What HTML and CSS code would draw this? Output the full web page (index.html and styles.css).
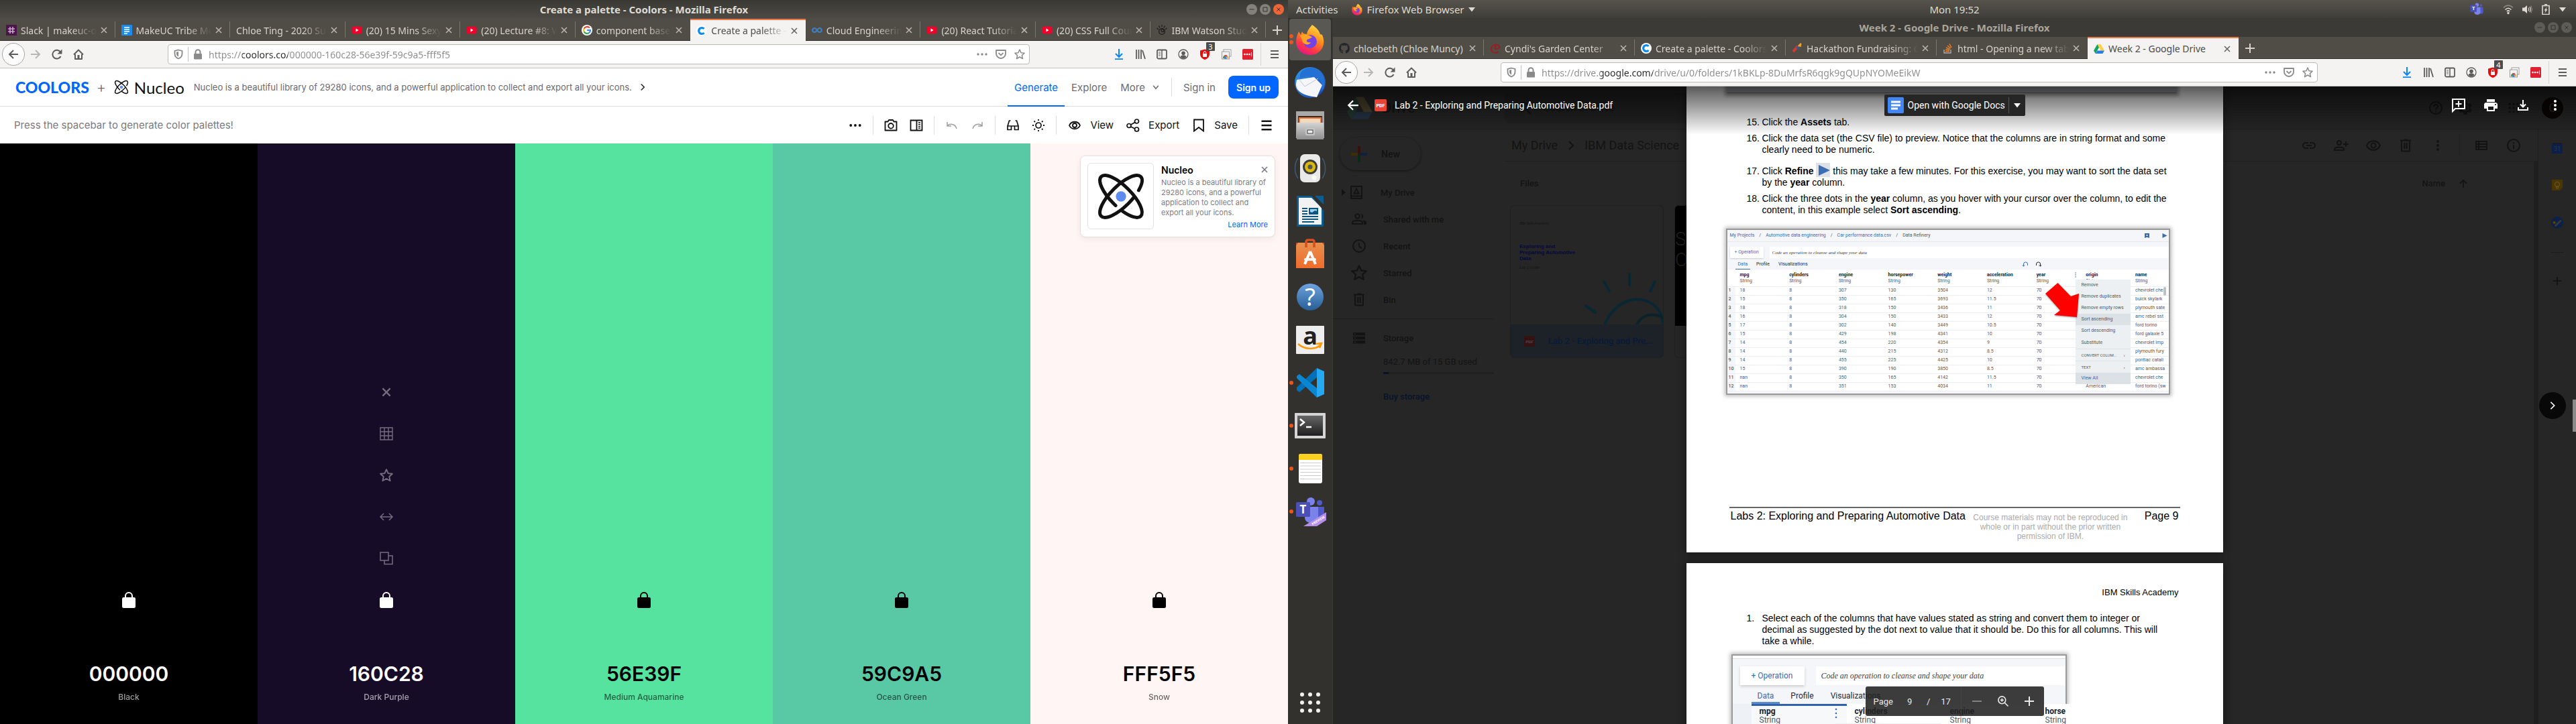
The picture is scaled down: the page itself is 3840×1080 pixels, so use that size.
FILE: index.html
```html
<!DOCTYPE html>
<html lang="en">
<head>
<meta charset="utf-8">
<title>Desktop</title>
<link rel="stylesheet" href="styles.css">
</head>
<body>
<svg class="defs" aria-hidden="true">
  <defs>
    <linearGradient id="g-fox" x1="0.8" y1="0" x2="0.3" y2="1"><stop offset="0" stop-color="#ffe14a"/><stop offset=".45" stop-color="#ff8a1c"/><stop offset=".75" stop-color="#ff3647"/><stop offset="1" stop-color="#e31587"/></linearGradient>
    <linearGradient id="g-bird" x1="0" y1="0" x2="1" y2="1"><stop offset="0" stop-color="#2f9be8"/><stop offset="1" stop-color="#1b3fae"/></linearGradient>
    <linearGradient id="g-metal" x1="0" y1="0" x2="0" y2="1"><stop offset="0" stop-color="#d4d4d4"/><stop offset="1" stop-color="#8d8d8d"/></linearGradient>
    <linearGradient id="g-help" x1="0" y1="0" x2="0" y2="1"><stop offset="0" stop-color="#6ea2e0"/><stop offset="1" stop-color="#285f95"/></linearGradient>
    <linearGradient id="g-bag" x1="0" y1="0" x2="0" y2="1"><stop offset="0" stop-color="#e8904e"/><stop offset="1" stop-color="#ee6c2c"/></linearGradient>
    <linearGradient id="g-term" x1="0" y1="0" x2="0" y2="1"><stop offset="0" stop-color="#666"/><stop offset="1" stop-color="#1e1e1e"/></linearGradient>
  </defs>
  <symbol id="x" viewBox="0 0 10 10"><path d="M1 1l8 8M9 1l-8 8" stroke="currentColor" stroke-width="1.6"/></symbol>
  <symbol id="plus" viewBox="0 0 16 16"><path d="M8 1v14M1 8h14" stroke="currentColor" stroke-width="2"/></symbol>
  <symbol id="back" viewBox="0 0 16 16"><path d="M15 8H2M8 2L2 8l6 6" fill="none" stroke="currentColor" stroke-width="2"/></symbol>
  <symbol id="fwd" viewBox="0 0 16 16"><path d="M1 8h13M8 2l6 6-6 6" fill="none" stroke="currentColor" stroke-width="2"/></symbol>
  <symbol id="reload" viewBox="0 0 16 16"><path d="M13.500 11A6.400 6.400 0 1 1 13 4.500" fill="none" stroke="currentColor" stroke-width="2"/><path d="M15.500 0.500v7H8.500z" fill="currentColor"/></symbol>
  <symbol id="home" viewBox="0 0 16 16"><path d="M1 8.500L8 1.500l7 7M3 8v7h10V8" fill="none" stroke="currentColor" stroke-width="2" stroke-linejoin="round"/><path d="M6.500 9h3v6h-3z" fill="currentColor"/></symbol>
  <symbol id="shield" viewBox="0 0 16 16"><path d="M8 1.500l5.500 1.500v4c0 4-2.500 6.500-5.500 7.500C5 13.500 2.500 11 2.500 7V3z" fill="none" stroke="currentColor" stroke-width="1.800"/><path d="M8 4v7.500C6 10.500 5 9 5 7V4.800z" fill="currentColor"/></symbol>
  <symbol id="lock" viewBox="0 0 16 16"><path d="M4.500 8V4.800a3.500 3.500 0 0 1 7 0V8" fill="none" stroke="currentColor" stroke-width="2"/><rect x="2" y="7" width="12" height="8.500" rx="1.200" fill="currentColor"/></symbol>
  <symbol id="dots" viewBox="0 0 16 16"><g fill="currentColor"><circle cx="2" cy="8" r="1.700"/><circle cx="8" cy="8" r="1.700"/><circle cx="14" cy="8" r="1.700"/></g></symbol>
  <symbol id="vdots" viewBox="0 0 24 24"><g fill="currentColor"><circle cx="12" cy="6" r="2"/><circle cx="12" cy="12" r="2"/><circle cx="12" cy="18" r="2"/></g></symbol>
  <symbol id="pocket" viewBox="0 0 16 16"><path d="M1 2h14v5a7 7 0 0 1-14 0z" fill="none" stroke="currentColor" stroke-width="1.800" stroke-linejoin="round"/><path d="M4.500 6L8 9.300 11.500 6" fill="none" stroke="currentColor" stroke-width="1.800"/></symbol>
  <symbol id="star" viewBox="0 0 16 16"><path d="M8 1l2.100 4.700 5 .5-3.700 3.400 1.100 5L8 12l-4.500 2.600 1.100-5L.9 6.200l5-.5z" fill="none" stroke="currentColor" stroke-width="1.500" stroke-linejoin="round"/></symbol>
  <symbol id="down" viewBox="0 0 16 16"><path d="M8 0v12M3 7l5 5 5-5M2 15.200h12" fill="none" stroke="#0a84ff" stroke-width="2"/></symbol>
  <symbol id="library" viewBox="0 0 16 16"><path d="M2 1v14M5.500 1v14M9 1v14M11 2l4 13" stroke="currentColor" stroke-width="1.800"/></symbol>
  <symbol id="sidebar" viewBox="0 0 16 16"><rect x="1" y="1.500" width="14" height="13" rx="1.800" fill="none" stroke="currentColor" stroke-width="1.800"/><path d="M8 2v12" stroke="currentColor" stroke-width="1.500"/><path d="M3 5h3M3 7.500h3M3 10h3" stroke="currentColor"/></symbol>
  <symbol id="account" viewBox="0 0 16 16"><circle cx="8" cy="8" r="7" fill="none" stroke="currentColor" stroke-width="1.300"/><circle cx="8" cy="6.300" r="2.800" fill="currentColor"/><path d="M3.500 12.200a4.600 3.600 0 0 1 9 0A6 6 0 0 1 3.500 12.200" fill="currentColor"/></symbol>
  <symbol id="redshield" viewBox="0 0 16 16"><path d="M8 .5l7 2v5c0 4.500-3 7-7 8.500-4-1.500-7-4-7-8.500v-5z" fill="#e80d0d"/><rect x="5" y="7" width="6" height="5" fill="#fff"/><path d="M6.200 7V5.500a1.800 1.800 0 0 1 3.600 0V7" fill="none" stroke="#fff"/></symbol>
  <symbol id="webstore" viewBox="0 0 16 16"><rect x="4" y="1" width="11" height="10" fill="#fff" stroke="#999"/><rect x="1.500" y="4" width="11" height="11" fill="#f2f2f2" stroke="#999"/><path d="M3 14a4 5 0 0 1 8 0" fill="#e33b2e"/><circle cx="7" cy="13" r="2.300" fill="#3d85f4"/><path d="M3 14a4 5 0 0 1 2-4l1 4z" fill="#31a350"/><path d="M11 14a4 5 0 0 0-2-4l-1 4z" fill="#fbc02d"/></symbol>
  <symbol id="lastpass" viewBox="0 0 16 16"><rect width="16" height="16" rx="1.500" fill="#e0202f"/><g fill="#fff"><circle cx="3.500" cy="8" r="1.300"/><circle cx="7" cy="8" r="1.300"/><circle cx="10.500" cy="8" r="1.300"/><path d="M13 5h1v6h-1z"/></g></symbol>
  <symbol id="menu" viewBox="0 0 16 16"><path d="M2 3h12M2 8h12M2 13h12" stroke="currentColor" stroke-width="2"/></symbol>
  <symbol id="wmin" viewBox="0 0 16 16"><circle cx="8" cy="8" r="8" fill="currentColor"/><path d="M4.500 8h7" stroke="#34332e"/></symbol>
  <symbol id="wmax" viewBox="0 0 16 16"><circle cx="8" cy="8" r="8" fill="currentColor"/><path d="M5 5h6v6H5z" fill="none" stroke="#34332e"/></symbol>
  <symbol id="wclose" viewBox="0 0 16 16"><circle cx="8" cy="8" r="8" fill="currentColor"/><path d="M5.500 5.500l5 5M10.500 5.500l-5 5" stroke="#34332e"/></symbol>
  <symbol id="slack" viewBox="0 0 16 16"><rect width="16" height="16" fill="#4a154b"/><path d="M6 3v10M10 3v10M3 6h10M3 10h10" stroke="#c9a5c8" stroke-width="1.600"/></symbol>
  <symbol id="gdoc" viewBox="0 0 16 16"><rect width="16" height="16" rx="1" fill="#1a8cf0"/><path d="M4 4h8M4 7h8M4 10h8M4 13h5" stroke="#fff" stroke-width="1.500"/></symbol>
  <symbol id="yt" viewBox="0 0 16 16"><rect x=".5" y="2.500" width="15" height="11" rx="2.500" fill="#f0022a"/><path d="M6.500 5.500v5l4-2.500z" fill="#fff"/></symbol>
  <symbol id="google" viewBox="0 0 16 16"><circle cx="8" cy="8" r="8" fill="#fff"/><g fill="none" stroke-width="2.200"><path d="M11.800 4.600A5 5 0 0 0 3.600 5.800" stroke="#ea4335"/><path d="M3.600 5.800a5 5 0 0 0 0 4.500" stroke="#fbbc05"/><path d="M3.600 10.300a5 5 0 0 0 7.600 1.500" stroke="#34a853"/><path d="M11.200 11.800A5 5 0 0 0 13 8H8" stroke="#4285f4"/></g></symbol>
  <symbol id="coolors" viewBox="0 0 16 16"><circle cx="8" cy="8" r="8" fill="#fff"/><path d="M11.500 5a4.500 4.500 0 1 0 0 6" fill="none" stroke="#0a8cf0" stroke-width="3.200"/></symbol>
  <symbol id="infinity" viewBox="0 0 16 16"><path d="M8 8C6.500 5.500 5.500 5 4.200 5a3 3 0 0 0 0 6C5.500 11 6.500 10.500 8 8s2.500-3 3.800-3a3 3 0 0 1 0 6C10.500 11 9.500 10.500 8 8z" fill="none" stroke="#3f7fc0" stroke-width="2.200"/></symbol>
  <symbol id="watson" viewBox="0 0 16 16"><g fill="none" stroke="#1b1b1b" stroke-width="1.200"><circle cx="8" cy="10" r="4.300"/><path d="M8 0v3M3.500 1.500L5 4.500M12.500 1.500L11 4.500M.5 5L3 7M15.500 5L13 7"/><circle cx="9" cy="8.500" r="2"/></g></symbol>
  <symbol id="github" viewBox="0 0 16 16"><path fill="#23272c" d="M8 0C3.580 0 0 3.580 0 8c0 3.540 2.290 6.530 5.470 7.590.4.070.55-.17.55-.38 0-.19-.01-.82-.01-1.490-2.010.37-2.530-.49-2.690-.94-.09-.23-.48-.94-.82-1.130-.28-.15-.68-.52-.01-.53.63-.01 1.080.58 1.230.82.72 1.210 1.870.87 2.330.66.07-.52.28-.87.51-1.070-1.780-.2-3.640-.89-3.640-3.950 0-.87.31-1.590.82-2.150-.08-.2-.36-1.020.08-2.120 0 0 .67-.21 2.200.82.64-.18 1.320-.27 2-.27s1.360.09 2 .27c1.530-1.040 2.200-.82 2.200-.82.44 1.100.16 1.920.08 2.120.51.56.82 1.270.82 2.150 0 3.070-1.870 3.750-3.650 3.950.29.25.54.73.54 1.480 0 1.070-.01 1.930-.01 2.200 0 .21.15.46.55.38A8.010 8.010 0 0 0 16 8c0-4.420-3.580-8-8-8z"/></symbol>
  <symbol id="garden" viewBox="0 0 16 16"><path d="M13 13C7 17 1 13 2 8s8-7 11-4-1 6-4 5-1-5 1-4" fill="none" stroke="#a3161c" stroke-width="1.600"/></symbol>
  <symbol id="hammer" viewBox="0 0 16 16"><path d="M2 13l7-8" stroke="#d63a2c" stroke-width="4"/><path d="M7 6l3 3" stroke="#2c5aa8" stroke-width="3"/><path d="M10 5l4-4M12 5l2-1" stroke="#f0a829" stroke-width="2.500"/></symbol>
  <symbol id="stack" viewBox="0 0 16 16"><path d="M2 10v5h10v-5" fill="none" stroke="#aaa" stroke-width="1.400"/><path d="M4 12.500h6M4.200 10l6 .8M5 7l5.600 2.300M7 4l4.600 4M10 1.500l3 5.500" stroke="#f48024" stroke-width="1.400"/></symbol>
  <symbol id="drive" viewBox="0 0 16 16"><path d="M5.500 1L0 10.500 2.700 15 8 5.500z" fill="#11a35c"/><path d="M5.500 1h5L16 10.500h-5.500z" fill="#ffcf48"/><path d="M5.500 10.500H16L13.300 15H2.700z" fill="#2a7de1"/></symbol>
  <symbol id="nucleo" viewBox="0 0 24 24"><g fill="none" stroke="#111" stroke-width="1.500" stroke-linecap="round"><ellipse cx="12" cy="12" rx="4.600" ry="12.500" transform="rotate(45 12 12)" stroke-dasharray="49 4"/><ellipse cx="12" cy="12" rx="4.600" ry="12.500" transform="rotate(-45 12 12)" stroke-dasharray="23 4 40"/></g><circle cx="12" cy="12" r="2.300" fill="#5e8bf0"/></symbol>
  <symbol id="chevr" viewBox="0 0 16 16"><path d="M5 2l6 6-6 6" fill="none" stroke="currentColor" stroke-width="2"/></symbol>
  <symbol id="chevd" viewBox="0 0 16 16"><path d="M3 5l5 6 5-6" fill="none" stroke="currentColor" stroke-width="2"/></symbol>
  <symbol id="camera" viewBox="0 0 20 20"><path d="M1.500 4.500h4L7 2h6l1.500 2.500h4v13h-17z" fill="none" stroke="currentColor" stroke-width="1.800" stroke-linejoin="round"/><circle cx="10" cy="10.800" r="3.800" fill="none" stroke="currentColor" stroke-width="1.800"/></symbol>
  <symbol id="collage" viewBox="0 0 20 20"><path d="M1.500 2.500h17v15h-17zM10.500 2.500v15" fill="none" stroke="currentColor" stroke-width="1.800"/><path d="M13 6h3M13 8.700h3M13 11.400h3M13 14h3" stroke="currentColor" stroke-width="1.300"/></symbol>
  <symbol id="undo" viewBox="0 0 20 20"><path d="M3 5v6h6M3 11c3-4 12-4 14 4" fill="none" stroke="currentColor" stroke-width="1.500"/></symbol>
  <symbol id="redo" viewBox="0 0 20 20"><path d="M17 5v6h-6M17 11c-3-4-12-4-14 4" fill="none" stroke="currentColor" stroke-width="1.500"/></symbol>
  <symbol id="glasses" viewBox="0 0 20 20"><path d="M2 11v5.500h5.500V11zM12.500 11v5.500H18V11zM2 11h16M2 11L4.500 3H6.500M18 11L15.500 3h-2" fill="none" stroke="currentColor" stroke-width="1.700"/></symbol>
  <symbol id="sun" viewBox="0 0 20 20"><circle cx="10" cy="10" r="4" fill="none" stroke="currentColor" stroke-width="1.700"/><path d="M10 1v2M10 17v2M1 10h2M17 10h2M3.500 3.500L5 5M15 15l1.500 1.500M16.500 3.500L15 5M5 15l-1.500 1.500" stroke="currentColor" stroke-width="1.800"/></symbol>
  <symbol id="eye" viewBox="0 0 20 20"><path d="M2 10c3-7 13-7 16 0-3 7-13 7-16 0z" fill="none" stroke="currentColor" stroke-width="1.800"/><circle cx="10" cy="10" r="3" fill="none" stroke="currentColor" stroke-width="1.800"/></symbol>
  <symbol id="share" viewBox="0 0 20 20"><g fill="none" stroke="currentColor" stroke-width="1.700"><circle cx="4" cy="10.500" r="3"/><circle cx="15.500" cy="4" r="3"/><circle cx="15.500" cy="16" r="3"/><path d="M6.600 9l6.300-3.500M6.600 12l6.300 3"/></g></symbol>
  <symbol id="bookmark" viewBox="0 0 20 20"><path d="M3 1.500h14v17l-7-5.500-7 5.500z" fill="none" stroke="currentColor" stroke-width="1.800"/></symbol>
  <symbol id="grid" viewBox="0 0 20 20"><path d="M1 1h18v18H1zM7 1v18M13 1v18M1 7h18M1 13h18" fill="none" stroke="currentColor" stroke-width="1.400"/></symbol>
  <symbol id="drag" viewBox="0 0 20 20"><path d="M1 10h18M6 5l-5 5 5 5M14 5l5 5-5 5" fill="none" stroke="currentColor" stroke-width="1.500"/></symbol>
  <symbol id="copy" viewBox="0 0 20 20"><path d="M1 1h12v12H1zM13 6h6v12.500H7V13" fill="none" stroke="currentColor" stroke-width="1.500"/></symbol>
  <symbol id="padlock" viewBox="0 0 20 24"><path d="M5 10V6a5 5 0 0 1 10 0v4" fill="none" stroke="currentColor" stroke-width="2"/><rect y="8" width="20" height="16" rx="2.500" fill="currentColor"/></symbol>
  <symbol id="fox" viewBox="0 0 48 48"><path d="M27 2c7 5 10 8 12 14l3 1c7 16-3 30-18 30C8 47-1 33 5 17l2-5 3 5 2-5c1 3 4 4 7 4 1-6 4-9 8-14z" fill="url(#g-fox)"/><circle cx="24" cy="27" r="10" fill="#7542e5"/><path d="M9 18c8-4 13 0 18 2-2 3-7 3-8 5s2 4 6 3c-2 5-11 5-13-3z" fill="#ffa324"/></symbol>
  <symbol id="bird" viewBox="0 0 48 48"><circle cx="24" cy="24" r="23" fill="url(#g-bird)"/><path d="M4 20l26-4 12 12-8 18C16 44 2 38 3 26z" fill="#f4f6fa"/><path d="M8 20l8 10 20-12" fill="none" stroke="#c3c8d2"/><path d="M9 12C14 0 30-1 38 8c10 8 10 22 2 30l2-10C38 12 24 12 9 18z" fill="#2371d4"/></symbol>
  <symbol id="files" viewBox="0 0 48 48"><path d="M3 3h42v40H3z" fill="#a8a8a8"/><path d="M6 10h36v10H6z" fill="#3a2a22"/><path d="M7 12h34v9H7z" fill="#e9753a"/><path d="M9 14h30v6H9z" fill="#f4d8bb"/><path d="M4 20h40v25H4z" fill="url(#g-metal)"/><rect x="17" y="28" width="14" height="11" rx="2" fill="#c5c5c5"/><rect x="20" y="31" width="8" height="5" fill="#eee" stroke="#444"/></symbol>
  <symbol id="speaker" viewBox="0 0 48 48"><g fill="none" stroke="#3d5a78" stroke-width="1.500"><path d="M6 9c-6 8-6 22 0 30M42 9c6 8 6 22 0 30"/></g><rect x="9" y="3" width="30" height="42" rx="7" fill="#e9e9e7"/><circle cx="24" cy="22" r="11" fill="#3c3c3c"/><circle cx="24" cy="22" r="8" fill="#d9b90b"/><circle cx="24" cy="22" r="3.500" fill="#555"/><circle cx="30" cy="38" r="3.500" fill="#fafafa"/></symbol>
  <symbol id="writer" viewBox="0 0 48 48"><path d="M4 1h40v44a2 2 0 0 1-2 2H6a2 2 0 0 1-2-2z" fill="#0a5e8f"/><path d="M7 4h19l15 15v25H7z" fill="#f2f2f2"/><path d="M26 1h7l11 12v10z" fill="#33312d"/><path d="M31 1h13v13z" fill="#0c5e92"/><path d="M12 20h8M12 24h8M12 28h8M12 32h24M12 36h24M12 40h18" stroke="#0b5580" stroke-width="2"/><path d="M22 19h14v10H22z" fill="#0b5580"/><path d="M24 21h10v3l-3-1-4 3-3-1z" fill="#9cd0ee"/></symbol>
  <symbol id="software" viewBox="0 0 48 48"><path d="M3 7h42v38H3z" fill="#c7491d"/><path d="M3 11l3-4h36l3 4v34H3z" fill="url(#g-bag)"/><path d="M18 14V6q0-3 3-3h6q3 0 3 3v8" fill="none" stroke="#d84f1e" stroke-width="3.500"/><path d="M24 20l-8 19M24 20l8 19" stroke="#fff" stroke-width="4"/><rect x="15" y="30" width="18" height="4" rx="2" fill="#fff"/></symbol>
  <symbol id="help" viewBox="0 0 48 48"><circle cx="24" cy="24" r="20" fill="url(#g-help)"/><text x="24" y="37" text-anchor="middle" font-family="Noto Sans, sans-serif" font-size="36" fill="#fff">?</text></symbol>
  <symbol id="amazon" viewBox="0 0 48 48"><rect x="3" y="3" width="42" height="42" rx="1" fill="#eee"/><text x="24" y="31" text-anchor="middle" font-family="Open Sans, sans-serif" font-weight="700" font-size="36" fill="#222">a</text><path d="M6 30c10 9 26 9 34 1M33 30l8-1-3 7" fill="none" stroke="#f90" stroke-width="2.500"/></symbol>
  <symbol id="vscode" viewBox="0 0 48 48"><path d="M34 2L4 31v4l4 3L34 16z" fill="#0071b8"/><path d="M34 46L4 17v-3l4-3 26 21z" fill="#0a86d2"/><path d="M34 2l11 5v34l-11 5z" fill="#25a9f2"/></symbol>
  <symbol id="term" viewBox="0 0 48 48"><rect x="1" y="5" width="46" height="38" rx="1" fill="#d5d5d5"/><path d="M5 9h38v30H5z" fill="url(#g-term)"/><path d="M9 14l6 5-6 5M18 26h8" fill="none" stroke="#fff" stroke-width="2.500"/></symbol>
  <symbol id="notes" viewBox="0 0 48 48"><rect x="7" y="2" width="35" height="44" rx="3" fill="#fff"/><path d="M7 11V5a3 3 0 0 1 3-3h29a3 3 0 0 1 3 3v6z" fill="#fbd01f"/><path d="M9 15.500h31M9 20h31M9 25h31M9 29.500h31M9 34.500h31M9 39.500h31" stroke="#ccc"/></symbol>
  <symbol id="teams" viewBox="0 0 48 48"><circle cx="25" cy="9" r="6" fill="#7b83eb"/><circle cx="38" cy="11" r="4" fill="#5059c9"/><path d="M30 17h15v15c0 6-7 8-11 5z" fill="#5059c9"/><path d="M16 17h20v16c0 11-20 11-20 0z" fill="#7b83eb"/><rect x="3" y="10" width="21" height="22" rx="1.500" fill="#4a50b5"/><text x="13.500" y="27" text-anchor="middle" font-family="Open Sans, sans-serif" font-weight="700" font-size="17" fill="#fff">T</text></symbol>
  <symbol id="preview" viewBox="0 0 48 48"><path d="M14 46L48 25v12L34 46z" fill="#b48fe8"/><text x="37" y="39" text-anchor="middle" transform="rotate(-32 37 39)" font-family="Open Sans, sans-serif" font-weight="700" font-size="5" fill="#fff">PREVIEW</text></symbol>
  <symbol id="apps" viewBox="0 0 32 32"><g fill="#f2f1ef"><circle cx="4" cy="4" r="3"/><circle cx="16" cy="4" r="3"/><circle cx="28" cy="4" r="3"/><circle cx="4" cy="16" r="3"/><circle cx="16" cy="16" r="3"/><circle cx="28" cy="16" r="3"/><circle cx="4" cy="28" r="3"/><circle cx="16" cy="28" r="3"/><circle cx="28" cy="28" r="3"/></g></symbol>
  <symbol id="wifi" viewBox="0 0 16 16"><g fill="none" stroke="currentColor" stroke-width="1.600"><path d="M1 5.500c4-4.500 10-4.500 14 0" opacity=".4"/><path d="M3.500 8.500c3-3 6-3 9 0"/><path d="M5.800 11c1.500-1.500 2.900-1.500 4.400 0"/></g><circle cx="8" cy="13.500" r="1.700" fill="currentColor"/></symbol>
  <symbol id="volume" viewBox="0 0 16 16"><path d="M1 5.500h3L8 2v12l-4-3.500H1z" fill="currentColor"/><path d="M10 5.500q1.500 2.500 0 5M12 4q2.500 4 0 8" fill="none" stroke="currentColor" stroke-width="1.200"/><path d="M14 2.500q3 5.500 0 11" fill="none" stroke="currentColor" opacity=".5"/></symbol>
  <symbol id="battery" viewBox="0 0 16 16"><path d="M3 2.500h10v13H3zM6 .8h4" fill="none" stroke="currentColor" stroke-width="1.600"/><path d="M9.500 4.500L5.500 9.500h2l-1 4 4-5.500h-2z" fill="currentColor"/></symbol>
  <symbol id="tri" viewBox="0 0 10 10"><path d="M0 2h10L5 8.500z" fill="currentColor"/></symbol>
  <symbol id="trir" viewBox="0 0 10 10"><path d="M2 0v10l6-5z" fill="currentColor"/></symbol>
  <symbol id="pdf" viewBox="0 0 18 18"><rect width="18" height="18" rx="2" fill="currentColor"/><text x="9" y="12" text-anchor="middle" font-family="Roboto, sans-serif" font-weight="900" font-size="7" fill="#fff">PDF</text></symbol>
  <symbol id="pdf-dim" viewBox="0 0 18 18"><rect width="18" height="18" rx="2" fill="#35110f"/><text x="9" y="12" text-anchor="middle" font-family="Roboto, sans-serif" font-weight="900" font-size="7" fill="#50403f">PDF</text></symbol>
  <symbol id="m-drive" viewBox="0 0 24 24"><path d="M4 3h16v18H4zM4 17.500h16" fill="none" stroke="currentColor" stroke-width="2"/><path d="M12 6.500l3.500 7h-7z" fill="none" stroke="currentColor" stroke-width="1.800"/></symbol>
  <symbol id="m-people" viewBox="0 0 24 24"><circle cx="9.500" cy="7.500" r="3.200" fill="none" stroke="currentColor" stroke-width="1.900"/><path d="M2 19v-2c0-4 15-4 15 0v2z" fill="none" stroke="currentColor" stroke-width="1.900"/><path d="M15 4a3.800 3.800 0 0 1 0 7.500q2-3.500 0-7.500zM17.500 13.500c3 .5 5.500 1.500 5.500 3.500v3h-4v-3q0-2-1.500-3.500z" fill="currentColor"/></symbol>
  <symbol id="m-clock" viewBox="0 0 24 24"><circle cx="12" cy="12" r="9" fill="none" stroke="currentColor" stroke-width="2"/><path d="M12 7v5.500l4 3" fill="none" stroke="currentColor" stroke-width="1.800"/></symbol>
  <symbol id="m-bin" viewBox="0 0 24 24"><path d="M6 5.500v14q0 1 1 1h10q1 0 1-1v-14M4 4.500h16M9 3.500h6M10.300 8v9M13.700 8v9" fill="none" stroke="currentColor" stroke-width="2"/></symbol>
  <symbol id="m-storage" viewBox="0 0 24 24"><path d="M3 4h18v4.500H3zM3 10h18v4.500H3zM3 16h18v4.500H3z" fill="currentColor"/><path d="M5 5.500h2v1.500H5zM5 11.500h2V13H5zM5 17.500h2V19H5z" fill="#262626"/></symbol>
  <symbol id="m-link" viewBox="0 0 24 24"><path fill="currentColor" d="M3.900 12c0-1.710 1.390-3.100 3.100-3.100h4V7H7c-2.760 0-5 2.240-5 5s2.240 5 5 5h4v-1.900H7c-1.710 0-3.100-1.390-3.100-3.100zM8 13h8v-2H8v2zm9-6h-4v1.900h4c1.710 0 3.100 1.390 3.100 3.100s-1.390 3.100-3.100 3.100h-4V17h4c2.760 0 5-2.240 5-5s-2.240-5-5-5z"/></symbol>
  <symbol id="m-addp" viewBox="0 0 24 24"><circle cx="9" cy="8" r="3" fill="none" stroke="currentColor" stroke-width="2"/><path d="M2 19v-1.500c0-4 14-4 14 0V19zM19 6v8M15 10h8" fill="none" stroke="currentColor" stroke-width="2"/></symbol>
  <symbol id="m-eye" viewBox="0 0 24 24"><path d="M2 12c4-9 16-9 20 0-4 9-16 9-20 0z" fill="none" stroke="currentColor" stroke-width="2"/><circle cx="12" cy="12" r="3.500" fill="none" stroke="currentColor" stroke-width="2"/></symbol>
  <symbol id="m-list" viewBox="0 0 24 24"><path d="M4 6h16v12H4zM8 6v12M4 10h16M4 14h16" fill="none" stroke="currentColor" stroke-width="2"/></symbol>
  <symbol id="m-info" viewBox="0 0 24 24"><circle cx="12" cy="12" r="9" fill="none" stroke="currentColor" stroke-width="2"/><path d="M12 7v2M12 11v6" stroke="currentColor" stroke-width="2"/></symbol>
  <symbol id="m-help" viewBox="0 0 24 24"><circle cx="12" cy="12" r="9" fill="none" stroke="currentColor" stroke-width="2"/><path d="M9 10a3 3 0 1 1 4.500 2.500Q12 13.500 12 15M12 16.500v2" fill="none" stroke="currentColor" stroke-width="2"/></symbol>
  <symbol id="m-gear" viewBox="0 0 24 24"><path fill="currentColor" fill-rule="evenodd" d="M19.430 12.980c.04-.32.07-.64.07-.98s-.03-.66-.07-.98l2.110-1.650c.19-.15.24-.42.12-.64l-2-3.460c-.12-.22-.39-.3-.61-.22l-2.490 1c-.52-.4-1.080-.73-1.690-.98l-.38-2.650C14.460 2.180 14.250 2 14 2h-4c-.25 0-.46.18-.49.42l-.38 2.650c-.61.25-1.170.59-1.690.98l-2.490-1c-.23-.09-.49 0-.61.22l-2 3.460c-.13.22-.07.49.12.64l2.110 1.650c-.04.32-.07.65-.07.98s.03.66.07.98l-2.110 1.650c-.19.15-.24.42-.12.64l2 3.460c.12.22.39.3.61.22l2.490-1c.52.4 1.080.73 1.690.98l.38 2.650c.03.24.24.42.49.42h4c.25 0 .46-.18.49-.42l.38-2.650c.61-.25 1.170-.59 1.690-.98l2.490 1c.23.09.49 0 .61-.22l2-3.460c.12-.22.07-.49-.12-.64zM12 17a5 5 0 1 1 0-10 5 5 0 0 1 0 10z"/><circle cx="12" cy="12" r="3.300" fill="currentColor"/></symbol>
  <symbol id="m-apps" viewBox="0 0 24 24"><g fill="currentColor"><circle cx="5" cy="5" r="2"/><circle cx="12" cy="5" r="2"/><circle cx="19" cy="5" r="2"/><circle cx="5" cy="12" r="2"/><circle cx="12" cy="12" r="2"/><circle cx="19" cy="12" r="2"/><circle cx="5" cy="19" r="2"/><circle cx="12" cy="19" r="2"/><circle cx="19" cy="19" r="2"/></g></symbol>
  <symbol id="m-comment" viewBox="0 0 24 24"><path d="M3 21V3h18v14H7z" fill="none" stroke="currentColor" stroke-width="2"/><path d="M12 5.500v9M7.500 10h9" stroke="currentColor" stroke-width="2"/></symbol>
  <symbol id="m-print" viewBox="0 0 24 24"><path fill="currentColor" d="M19 8H5c-1.660 0-3 1.340-3 3v6h4v4h12v-4h4v-6c0-1.660-1.340-3-3-3zm-3 11H8v-5h8v5zm3-7c-.55 0-1-.45-1-1s.45-1 1-1 1 .45 1 1-.45 1-1 1zm-1-9H6v4h12V3z"/></symbol>
  <symbol id="m-download" viewBox="0 0 24 24"><path d="M12 4v10M8 10.500l4 4 4-4M5 15v4h14v-4" fill="none" stroke="currentColor" stroke-width="2"/></symbol>
  <symbol id="m-up" viewBox="0 0 16 16"><path d="M8 15V2M2 8l6-6 6 6" fill="none" stroke="currentColor" stroke-width="1.800"/></symbol>
  <symbol id="m-search" viewBox="0 0 24 24"><circle cx="10" cy="10" r="6" fill="none" stroke="currentColor" stroke-width="2"/><path d="M14.500 14.500L21 21" stroke="currentColor" stroke-width="2.200"/></symbol>
  <symbol id="m-zoom" viewBox="0 0 24 24"><circle cx="10" cy="10" r="6.500" fill="none" stroke="currentColor" stroke-width="2"/><path d="M15 15l6 6M10 7v6M7 10h6" stroke="currentColor" stroke-width="2"/></symbol>
  <symbol id="calendar" viewBox="0 0 16 16"><path d="M0 2h16v14H0z" fill="#0c1f4a"/><path d="M1 0h14v2H1z" fill="#1c1c1c"/><text x="8" y="12" text-anchor="middle" font-family="Roboto, sans-serif" font-size="9" fill="#313744">31</text></symbol>
  <symbol id="keep" viewBox="0 0 16 16"><path d="M0 0h16v12l-4 4H0z" fill="#4b3500"/><circle cx="8" cy="7" r="3.500" fill="none" stroke="#6b5930"/><path d="M6.500 10h3v3h-3z" fill="none" stroke="#6b5930"/></symbol>
  <symbol id="tasks" viewBox="0 0 18 18"><circle cx="9" cy="9" r="9" fill="#0b2147"/><circle cx="4.500" cy="9" r="2" fill="#5f4403"/><path d="M6.500 13.500L14 6.500" stroke="#383838" stroke-width="3" stroke-linecap="round"/></symbol>
</svg>

<main class="desktop">
  <section class="monitor" aria-label="Left display">
    <div class="window">
      <header class="titlebar"><h1 class="window-title">Create a palette - Coolors - Mozilla Firefox</h1>
        <div class="window-buttons">
          <button aria-label="Minimize"><svg class="i16"><use href="#wmin"/></svg></button>
          <button aria-label="Maximize"><svg class="i16"><use href="#wmax"/></svg></button>
          <button aria-label="Close" class="hot"><svg class="i16"><use href="#wclose"/></svg></button>
        </div>
      </header>
      <nav class="tabs" aria-label="Tabs">
        <button class="tab"><svg class="i16"><use href="#slack"/></svg><span>Slack | makeuc-organizers</span><svg class="i10"><use href="#x"/></svg></button>
        <button class="tab"><svg class="i16"><use href="#gdoc"/></svg><span>MakeUC Tribe Meeting</span><svg class="i10"><use href="#x"/></svg></button>
        <button class="tab"><span>Chloe Ting - 2020 Summer</span><svg class="i10"><use href="#x"/></svg></button>
        <button class="tab"><svg class="i16"><use href="#yt"/></svg><span>(20) 15 Mins Sexy Legs</span><svg class="i10"><use href="#x"/></svg></button>
        <button class="tab"><svg class="i16"><use href="#yt"/></svg><span>(20) Lecture #8: Word</span><svg class="i10"><use href="#x"/></svg></button>
        <button class="tab last-before"><svg class="i16"><use href="#google"/></svg><span>component based</span><svg class="i10"><use href="#x"/></svg></button>
        <button class="tab active"><svg class="i16"><use href="#coolors"/></svg><span>Create a palette - C</span><svg class="i10"><use href="#x"/></svg></button>
        <button class="tab"><svg class="i16"><use href="#infinity"/></svg><span>Cloud Engineering</span><svg class="i10"><use href="#x"/></svg></button>
        <button class="tab"><svg class="i16"><use href="#yt"/></svg><span>(20) React Tutorial</span><svg class="i10"><use href="#x"/></svg></button>
        <button class="tab"><svg class="i16"><use href="#yt"/></svg><span>(20) CSS Full Course</span><svg class="i10"><use href="#x"/></svg></button>
        <button class="tab"><svg class="i16"><use href="#watson"/></svg><span>IBM Watson Studio</span><svg class="i10"><use href="#x"/></svg></button>
        <button class="new-tab" aria-label="New tab"><svg class="i16"><use href="#plus"/></svg></button>
      </nav>
      <div class="navbar">
        <button class="nav-back" aria-label="Back"><svg class="i16"><use href="#back"/></svg></button>
        <button class="off" aria-label="Forward"><svg class="i16"><use href="#fwd"/></svg></button>
        <button aria-label="Reload"><svg class="i16"><use href="#reload"/></svg></button>
        <button aria-label="Home"><svg class="i16"><use href="#home"/></svg></button>
        <label class="urlbar">
          <svg class="i16"><use href="#shield"/></svg><i class="rule"></i><svg class="i16"><use href="#lock"/></svg>
          <input class="url-coolors" aria-label="Address" value="https://coolors.co/000000-160c28-56e39f-59c9a5-fff5f5">
          <svg class="i16"><use href="#dots"/></svg><svg class="i16"><use href="#pocket"/></svg><svg class="i16"><use href="#star"/></svg>
        </label>
        <div class="nav-tools">
          <button aria-label="Downloads"><svg class="i16"><use href="#down"/></svg></button>
          <button aria-label="Library"><svg class="i16"><use href="#library"/></svg></button>
          <button aria-label="Sidebar"><svg class="i16"><use href="#sidebar"/></svg></button>
          <button aria-label="Account"><svg class="i16"><use href="#account"/></svg></button>
          <button class="badged" aria-label="Blocker"><svg class="i16"><use href="#redshield"/></svg><b class="badge">3</b></button>
          <button aria-label="Web store"><svg class="i16"><use href="#webstore"/></svg></button>
          <button aria-label="Passwords"><svg class="i16"><use href="#lastpass"/></svg></button>
        </div>
        <button class="nav-menu" aria-label="Menu"><svg class="i16"><use href="#menu"/></svg></button>
      </div>

      <div class="coolors">
        <header class="c-header">
          <a class="c-logo" href="#">COOLORS</a><span class="c-plus">+</span>
          <a class="c-sponsor" href="#"><svg class="i24"><use href="#nucleo"/></svg>Nucleo</a>
          <a class="c-tag" href="#">Nucleo is a beautiful library of 29280 icons, and a powerful application to collect and export all your icons.<svg class="i12"><use href="#chevr"/></svg></a>
          <nav class="c-nav">
            <a class="on" href="#">Generate</a><a href="#">Explore</a><a href="#">More<svg class="i12"><use href="#chevd"/></svg></a>
            <i class="rule"></i><a class="c-signin" href="#">Sign in</a><button class="c-signup">Sign up</button>
          </nav>
        </header>
        <div class="c-toolbar">
          <p>Press the spacebar to generate color palettes!</p>
          <button aria-label="More"><svg class="i18"><use href="#dots"/></svg></button><i class="rule"></i>
          <button aria-label="From photo"><svg class="i20"><use href="#camera"/></svg></button>
          <button aria-label="Collage"><svg class="i20"><use href="#collage"/></svg></button><i class="rule"></i>
          <button class="off" aria-label="Undo"><svg class="i20"><use href="#undo"/></svg></button>
          <button class="off" aria-label="Redo"><svg class="i20"><use href="#redo"/></svg></button><i class="rule"></i>
          <button aria-label="Color blindness"><svg class="i20"><use href="#glasses"/></svg></button>
          <button aria-label="Adjust"><svg class="i20"><use href="#sun"/></svg></button><i class="rule"></i>
          <button class="wide"><svg class="i20"><use href="#eye"/></svg>View</button>
          <button class="wide"><svg class="i20"><use href="#share"/></svg>Export</button>
          <button class="wide"><svg class="i20"><use href="#bookmark"/></svg>Save</button><i class="rule"></i>
          <button aria-label="Menu"><svg class="i20"><use href="#menu"/></svg></button>
        </div>
        <div class="palette">
          <div class="swatch black"><div class="tools"><button aria-label="Lock"><svg class="padlock"><use href="#padlock"/></svg></button></div><h2>000000</h2><p>Black</p></div>
          <div class="swatch purple"><div class="tools">
            <button class="dim" aria-label="Remove"><svg class="i14"><use href="#x"/></svg></button>
            <button class="dim" aria-label="Shades"><svg class="i20"><use href="#grid"/></svg></button>
            <button class="dim" aria-label="Favorite"><svg class="i20"><use href="#star"/></svg></button>
            <button class="dim" aria-label="Drag"><svg class="i20"><use href="#drag"/></svg></button>
            <button class="dim" aria-label="Copy"><svg class="i20"><use href="#copy"/></svg></button>
            <button aria-label="Lock"><svg class="padlock"><use href="#padlock"/></svg></button></div><h2>160C28</h2><p>Dark Purple</p></div>
          <div class="swatch aqua"><div class="tools"><button aria-label="Lock"><svg class="padlock"><use href="#padlock"/></svg></button></div><h2>56E39F</h2><p>Medium Aquamarine</p></div>
          <div class="swatch ocean"><div class="tools"><button aria-label="Lock"><svg class="padlock"><use href="#padlock"/></svg></button></div><h2>59C9A5</h2><p>Ocean Green</p></div>
          <div class="swatch snow"><div class="tools"><button aria-label="Lock"><svg class="padlock"><use href="#padlock"/></svg></button></div><h2>FFF5F5</h2><p>Snow</p></div>
          <aside class="promo">
            <div class="promo-art"><svg class="i80"><use href="#nucleo"/></svg></div>
            <div class="promo-body">
              <div class="promo-head"><h3>Nucleo</h3><button aria-label="Close"><svg class="i10"><use href="#x"/></svg></button></div>
              <p>Nucleo is a beautiful library of 29280 icons, and a powerful application to collect and export all your icons.</p>
              <a href="#">Learn More</a>
            </div>
          </aside>
        </div>
      </div>
    </div>
  </section>

  <section class="monitor" aria-label="Right display">
    <header class="topbar">
      <button>Activities</button>
      <button class="app-menu"><svg class="i18"><use href="#fox"/></svg>Firefox Web Browser<svg class="i10"><use href="#tri"/></svg></button>
      <time>Mon 19:52</time>
      <div class="tray"><svg class="i22 teams-tray"><use href="#teams"/></svg><svg class="i16"><use href="#wifi"/></svg><svg class="i16"><use href="#volume"/></svg><svg class="i16"><use href="#battery"/></svg><svg class="i10"><use href="#tri"/></svg></div>
    </header>
    <div class="workspace">
      <nav class="dock" aria-label="Dock">
        <button class="current run two" aria-label="Firefox"><svg class="i48"><use href="#fox"/></svg></button>
        <button aria-label="Thunderbird"><svg class="i48"><use href="#bird"/></svg></button>
        <button aria-label="Files"><svg class="i48"><use href="#files"/></svg></button>
        <button aria-label="Rhythmbox"><svg class="i48"><use href="#speaker"/></svg></button>
        <button aria-label="Writer"><svg class="i48"><use href="#writer"/></svg></button>
        <button aria-label="Software"><svg class="i48"><use href="#software"/></svg></button>
        <button aria-label="Help"><svg class="i48"><use href="#help"/></svg></button>
        <button aria-label="Amazon"><svg class="i48"><use href="#amazon"/></svg></button>
        <button class="run" aria-label="Code"><svg class="i48"><use href="#vscode"/></svg></button>
        <button class="run" aria-label="Terminal"><svg class="i48"><use href="#term"/></svg></button>
        <button class="run" aria-label="Notes"><svg class="i48"><use href="#notes"/></svg></button>
        <button class="run" aria-label="Teams"><svg class="i48"><use href="#teams"/><use href="#preview"/></svg></button>
        <button class="show-apps" aria-label="Show applications"><svg class="i32"><use href="#apps"/></svg></button>
      </nav>
      <div class="window idle">
        <header class="titlebar"><h1 class="window-title">Week 2 - Google Drive - Mozilla Firefox</h1>
          <div class="window-buttons">
            <button aria-label="Minimize"><svg class="i16"><use href="#wmin"/></svg></button>
            <button aria-label="Maximize"><svg class="i16"><use href="#wmax"/></svg></button>
            <button aria-label="Close"><svg class="i16"><use href="#wclose"/></svg></button>
          </div>
        </header>
        <nav class="tabs" aria-label="Tabs">
          <button class="tab"><svg class="i16"><use href="#github"/></svg><span>chloebeth (Chloe Muncy)</span><svg class="i10"><use href="#x"/></svg></button>
          <button class="tab"><svg class="i16"><use href="#garden"/></svg><span>Cyndi's Garden Center</span><svg class="i10"><use href="#x"/></svg></button>
          <button class="tab"><svg class="i16"><use href="#coolors"/></svg><span>Create a palette - Coolors</span><svg class="i10"><use href="#x"/></svg></button>
          <button class="tab"><svg class="i16"><use href="#hammer"/></svg><span>Hackathon Fundraising: Gu</span><svg class="i10"><use href="#x"/></svg></button>
          <button class="tab last-before"><svg class="i16"><use href="#stack"/></svg><span>html - Opening a new tab in</span><svg class="i10"><use href="#x"/></svg></button>
          <button class="tab active"><svg class="i16"><use href="#drive"/></svg><span>Week 2 - Google Drive</span><svg class="i10"><use href="#x"/></svg></button>
          <button class="new-tab" aria-label="New tab"><svg class="i16"><use href="#plus"/></svg></button>
        </nav>
        <div class="navbar">
          <button class="nav-back" aria-label="Back"><svg class="i16"><use href="#back"/></svg></button>
          <button class="off" aria-label="Forward"><svg class="i16"><use href="#fwd"/></svg></button>
          <button aria-label="Reload"><svg class="i16"><use href="#reload"/></svg></button>
          <button aria-label="Home"><svg class="i16"><use href="#home"/></svg></button>
          <label class="urlbar">
            <svg class="i16"><use href="#shield"/></svg><i class="rule"></i><svg class="i16"><use href="#lock"/></svg>
            <input class="url-drive" aria-label="Address" value="https://drive.google.com/drive/u/0/folders/1kBKLp-8DuMrfsR6qgk9gQUpNYOMeEikW">
            <svg class="i16"><use href="#dots"/></svg><svg class="i16"><use href="#pocket"/></svg><svg class="i16"><use href="#star"/></svg>
          </label>
          <div class="nav-tools">
            <button aria-label="Downloads"><svg class="i16"><use href="#down"/></svg></button>
            <button aria-label="Library"><svg class="i16"><use href="#library"/></svg></button>
            <button aria-label="Sidebar"><svg class="i16"><use href="#sidebar"/></svg></button>
            <button aria-label="Account"><svg class="i16"><use href="#account"/></svg></button>
            <button class="badged" aria-label="Blocker"><svg class="i16"><use href="#redshield"/></svg><b class="badge">4</b></button>
            <button aria-label="Web store"><svg class="i16"><use href="#webstore"/></svg></button>
            <button aria-label="Passwords"><svg class="i16"><use href="#lastpass"/></svg></button>
          </div>
          <button class="nav-menu" aria-label="Menu"><svg class="i16"><use href="#menu"/></svg></button>
        </div>

        <div class="drive">
          <header class="d-header">
            <a class="d-brand" href="#"><svg class="i40"><use href="#drive"/></svg>Drive</a>
            <label class="d-search"><svg class="i24"><use href="#m-search"/></svg><input aria-label="Search" placeholder="Search in Drive"></label>
            <div class="d-tools"><svg class="i24"><use href="#m-help"/></svg><svg class="i24"><use href="#m-gear"/></svg><svg class="i20"><use href="#m-apps"/></svg><span class="d-avatar">C</span></div>
          </header>
          <div class="d-body">
            <nav class="d-side">
              <button class="d-new"><svg class="i24" viewBox="0 0 24 24"><path d="M12 0v12" stroke="#3c0f0c" stroke-width="4"/><path d="M12 12v12" stroke="#0b2a14" stroke-width="4"/><path d="M0 12h10" stroke="#3e2e01" stroke-width="4"/><path d="M14 12h10" stroke="#101f3c" stroke-width="4"/></svg>New</button>
              <a href="#"><svg class="i10"><use href="#trir"/></svg><svg class="i24"><use href="#m-drive"/></svg>My Drive</a>
              <a href="#"><svg class="i24"><use href="#m-people"/></svg>Shared with me</a>
              <a href="#"><svg class="i24"><use href="#m-clock"/></svg>Recent</a>
              <a href="#"><svg class="i24"><use href="#star"/></svg>Starred</a>
              <a href="#"><svg class="i24"><use href="#m-bin"/></svg>Bin</a>
              <hr>
              <a href="#"><svg class="i24"><use href="#m-storage"/></svg>Storage</a>
              <p class="d-quota">842.7 MB of 15 GB used</p>
              <div class="d-meter"><i></i></div>
              <a class="d-buy" href="#">Buy storage</a>
            </nav>
            <section class="d-main">
              <div class="d-bar">
                <div class="d-crumbs"><a href="#">My Drive</a><svg class="i16"><use href="#chevr"/></svg><a href="#">IBM Data Science</a></div>
                <button aria-label="Link"><svg class="i24"><use href="#m-link"/></svg></button>
                <button aria-label="Share"><svg class="i24"><use href="#m-addp"/></svg></button>
                <button aria-label="Preview"><svg class="i24"><use href="#m-eye"/></svg></button>
                <button aria-label="Remove"><svg class="i24"><use href="#m-bin"/></svg></button>
                <button aria-label="More"><svg class="i24"><use href="#vdots"/></svg></button>
                <i class="rule"></i>
                <button aria-label="List view"><svg class="i24"><use href="#m-list"/></svg></button>
                <button aria-label="Details"><svg class="i24"><use href="#m-info"/></svg></button>
              </div>
              <div class="d-content">
                <div class="d-sort"><span>Files</span><button>Name<svg class="i14"><use href="#m-up"/></svg></button></div>
                <div class="d-files">
                  <article class="d-card">
                    <div class="d-thumb">
                      <small>IBM Skills Academy</small>
                      <h4>Exploring and<br>Preparing Automotive<br>Data</h4>
                      <em>Lab 2 Guide</em>
                      <svg class="d-art" viewBox="0 0 118 136"><g fill="none" stroke="#092733" stroke-width="4" stroke-linecap="round"><path d="M68 3v16M30 14l8 14M106 14l-7 14M3 50l14 10"/><path d="M22 136C18 20 116 22 118 78"/><path d="M76 90c4-30 30-30 42-22" stroke="#0a2228"/></g></svg>
                    </div>
                    <footer><svg class="i16"><use href="#pdf-dim"/></svg>Lab 2 - Exploring and Pre...</footer>
                  </article>
                  <article class="d-card plain"><div class="d-cover">S<br>O</div></article>
                </div>
              </div>
            </section>
            <aside class="d-rail">
              <svg class="i16"><use href="#calendar"/></svg><svg class="i16"><use href="#keep"/></svg><svg class="i18"><use href="#tasks"/></svg><hr><svg class="i14"><use href="#plus"/></svg>
            </aside>
          </div>

          <div class="viewer">
            <div class="pages">
              <article class="page first">
                <div class="tail"></div>
                <ol class="steps" start="15">
                  <li><p>Click the <b>Assets</b> tab.</p></li>
                  <li><p>Click the data set (the CSV file) to preview. Notice that the columns are in string format and some<br>clearly need to be numeric.</p></li>
                  <li class="with-icon"><p>Click <b>Refine</b> <svg class="refine" viewBox="0 0 21 21"><path d="M0 0h21v21H0z" fill="#dde1e6"/><path d="M4 3l17 8L4 19z" fill="#3c6cb5"/></svg> this may take a few minutes. For this exercise, you may want to sort the data set<br>by the <b>year</b> column.</p></li>
                  <li><p>Click the three dots in the <b>year</b> column, as you hover with your cursor over the column, to edit the<br>content, in this example select <b>Sort ascending</b>.</p></li>
                </ol>
                <figure class="shot refinery">
                  <div class="r-crumbs"><a href="#">My Projects</a> / <a href="#">Automotive data engineering</a> / <a href="#">Car performance data.csv</a> / <span>Data Refinery</span>
                    <svg class="r-save" viewBox="0 0 8 8"><path d="M0 0h8v8L4 6.500 0 8z" fill="#3b6bb3"/><circle cx="4" cy="3.500" r="1.200" fill="#fff"/></svg><svg class="r-run" viewBox="0 0 8 8"><path d="M0 0l8 4-8 4z" fill="#3b6bb3"/></svg></div>
                  <div class="r-op"><button>+ Operation</button><input aria-label="Operation code" placeholder="Code an operation to cleanse and shape your data"></div>
                  <div class="r-tabs"><a class="on" href="#">Data</a><a href="#">Profile</a><a href="#">Visualizations</a>
                    <svg class="r-turn blue" viewBox="0 0 10 8"><path d="M2 7V4a3 3 0 0 1 6 0v2M.500 5.500L2 7.300l1.500-1.800" fill="none" stroke="currentColor"/></svg><svg class="r-turn" viewBox="0 0 10 8"><path d="M2 6V4a3 3 0 0 1 6 0v3M6.500 5.500L8 7.300l1.500-1.800" fill="none" stroke="currentColor"/></svg></div>
                  <table class="r-table">
                    <thead><tr><th class="n"></th><th>mpg<small>String</small></th><th>cylinders<small>String</small></th><th>engine<small>String</small></th><th>horsepower<small>String</small></th><th>weight<small>String</small></th><th>acceleration<small>String</small></th><th>year<small>String</small></th><th>origin<small>String</small></th><th class="last">name<small>String</small></th></tr></thead>
                    <tbody>
                      <tr><th>1</th><td>18</td><td>8</td><td>307</td><td>130</td><td>3504</td><td>12</td><td>70</td><td></td><td>chevrolet che</td></tr>
                      <tr><th>2</th><td>15</td><td>8</td><td>350</td><td>165</td><td>3693</td><td>11.5</td><td>70</td><td></td><td>buick skylark</td></tr>
                      <tr><th>3</th><td>18</td><td>8</td><td>318</td><td>150</td><td>3436</td><td>11</td><td>70</td><td></td><td>plymouth sate</td></tr>
                      <tr><th>4</th><td>16</td><td>8</td><td>304</td><td>150</td><td>3433</td><td>12</td><td>70</td><td></td><td>amc rebel sst</td></tr>
                      <tr><th>5</th><td>17</td><td>8</td><td>302</td><td>140</td><td>3449</td><td>10.5</td><td>70</td><td></td><td>ford torino</td></tr>
                      <tr><th>6</th><td>15</td><td>8</td><td>429</td><td>198</td><td>4341</td><td>10</td><td>70</td><td></td><td>ford galaxie 5</td></tr>
                      <tr><th>7</th><td>14</td><td>8</td><td>454</td><td>220</td><td>4354</td><td>9</td><td>70</td><td></td><td>chevrolet imp</td></tr>
                      <tr><th>8</th><td>14</td><td>8</td><td>440</td><td>215</td><td>4312</td><td>8.5</td><td>70</td><td></td><td>plymouth fury</td></tr>
                      <tr><th>9</th><td>14</td><td>8</td><td>455</td><td>225</td><td>4425</td><td>10</td><td>70</td><td></td><td>pontiac catali</td></tr>
                      <tr><th>10</th><td>15</td><td>8</td><td>390</td><td>190</td><td>3850</td><td>8.5</td><td>70</td><td></td><td>amc ambassa</td></tr>
                      <tr><th>11</th><td>nan</td><td>8</td><td>350</td><td>165</td><td>4142</td><td>11.5</td><td>70</td><td></td><td>chevrolet che</td></tr>
                      <tr><th>12</th><td>nan</td><td>8</td><td>351</td><td>153</td><td>4034</td><td>11</td><td>70</td><td>American</td><td>ford torino (sw</td></tr>
                    </tbody>
                  </table>
                  <svg class="r-dots" viewBox="0 0 2 8"><g fill="#3b6bb3"><circle cx="1" cy="1" r=".8"/><circle cx="1" cy="4" r=".8"/><circle cx="1" cy="7" r=".8"/></g></svg>
                  <i class="r-thumb"></i>
                  <div class="r-menu"><button>Remove</button><button>Remove duplicates</button><button>Remove empty rows</button><button class="sel">Sort ascending</button><button>Sort descending</button><button>Substitute</button><button class="caps">CONVERT COLUM... <b>›</b></button><button class="caps">TEXT <b>›</b></button><button class="sel link">View All</button></div>
                  <svg class="r-arrow" viewBox="0 0 50 51"><path d="M18.500 0L38 20l12-4-3 35-34-3 9-7L0 16z" fill="#f00"/></svg>
                </figure>
                <footer class="page-foot"><span>Labs 2: Exploring and Preparing Automotive Data</span><small>Course materials may not be reproduced in<br>whole or in part without the prior written<br>permission of IBM.</small><span>Page 9</span></footer>
              </article>
              <article class="page second">
                <p class="page-head">IBM Skills Academy</p>
                <ol class="steps">
                  <li><p>Select each of the columns that have values stated as string and convert them to integer or<br>decimal as suggested by the dot next to value that it should be. Do this for all columns. This will<br>take a while.</p></li>
                </ol>
                <figure class="shot closeup">
                  <div class="z-strip"></div>
                  <div class="z-op"><button>+ Operation</button><input aria-label="Operation code" placeholder="Code an operation to cleanse and shape your data"></div>
                  <div class="z-tabs"><a class="on" href="#">Data</a><a href="#">Profile</a><a href="#">Visualizations</a></div>
                  <div class="z-cols">
                    <div class="picked"><b>mpg</b>String<svg class="z-dots" viewBox="0 0 4 16"><g fill="#3b6bb3"><circle cx="2" cy="2" r="1.300"/><circle cx="2" cy="8" r="1.300"/><circle cx="2" cy="14" r="1.300"/></g></svg></div>
                    <div><b>cylinders</b>String</div><div><b>engine</b>String</div><div><b>horse</b>String</div>
                  </div>
                  <i class="z-pop"></i>
                </figure>
              </article>
            </div>
            <div class="v-shade"></div>
            <header class="v-head">
              <button aria-label="Close"><svg class="i18"><use href="#back"/></svg></button>
              <h2><svg class="i18"><use href="#pdf"/></svg>Lab 2 - Exploring and Preparing Automotive Data.pdf</h2>
              <div class="v-open"><button><svg class="docs" viewBox="0 0 24 24"><rect width="24" height="24" rx="2" fill="#4285f4"/><path d="M5 7h14M5 12h14M5 17h10" stroke="#fff" stroke-width="3"/></svg>Open with Google Docs</button><button aria-label="Other apps" class="v-more"><svg class="i10"><use href="#tri"/></svg></button></div>
              <div class="v-tools"><button aria-label="Comment"><svg class="i24"><use href="#m-comment"/></svg></button><button aria-label="Print"><svg class="i24"><use href="#m-print"/></svg></button><button aria-label="Download"><svg class="i24"><use href="#m-download"/></svg></button><button aria-label="More"><svg class="i24"><use href="#vdots"/></svg></button></div>
            </header>
            <button class="v-next" aria-label="Next"><svg class="i14"><use href="#chevr"/></svg></button>
            <i class="v-thumb"></i>
            <div class="v-pager"><label for="pg">Page</label><input id="pg" value="9"><span>/</span><span>17</span><i class="rule"></i><button class="off" aria-label="Zoom out"><svg class="i16" viewBox="0 0 16 16"><path d="M1 8h14" stroke="currentColor" stroke-width="2"/></svg></button><button aria-label="Fit"><svg class="i20"><use href="#m-zoom"/></svg></button><button aria-label="Zoom in"><svg class="i16"><use href="#plus"/></svg></button></div>
          </div>
        </div>
      </div>
    </div>
  </section>
</main>
</body>
</html>
```

FILE: styles.css
```css
* { box-sizing: border-box; }
html, body { margin: 0; height: 100%; }
body { background: #262626; font-family: "Noto Sans", sans-serif; font-size: 14px; overflow: hidden; }
h1, h2, h3, h4, p, ol, figure { margin: 0; padding: 0; font-weight: inherit; font-size: inherit; }
button { margin: 0; padding: 0; border: 0; background: none; color: inherit; font: inherit; display: inline-flex; align-items: center; justify-content: center; cursor: pointer; }
a { color: inherit; text-decoration: none; }
input { border: 0; padding: 0; background: none; font: inherit; color: inherit; min-width: 0; outline: 0; }
svg { display: block; flex: none; }
hr { border: 0; margin: 0; }
.defs { position: absolute; width: 0; height: 0; }
.i10 { width: 10px; height: 10px; }
.i12 { width: 12px; height: 12px; }
.i14 { width: 14px; height: 14px; }
.i16 { width: 16px; height: 16px; }
.i18 { width: 18px; height: 18px; }
.i20 { width: 20px; height: 20px; }
.i22 { width: 22px; height: 22px; }
.i24 { width: 24px; height: 24px; }
.i32 { width: 32px; height: 32px; }
.i40 { width: 38px; height: 38px; }
.i48 { width: 48px; height: 48px; }
.i80 { width: 80px; height: 80px; }
.rule { width: 1px; flex: none; background: #ddd; }

.desktop { display: grid; grid-template-columns: 1fr 1fr; height: 100vh; }
.monitor { display: flex; flex-direction: column; min-width: 0; min-height: 0; overflow: hidden; }
.window { flex: 1; display: flex; flex-direction: column; min-width: 0; min-height: 0; }

/* Window chrome */
.titlebar { height: 28px; flex: none; display: grid; grid-template-columns: 1fr auto 1fr; align-items: center; background: linear-gradient(#393834, #4e4b45); color: #dfdbd2; }
.idle .titlebar { background: #3b3a36; color: #a9a59b; }
.window-title { grid-column: 2; font-weight: 700; font-size: 15px; line-height: 20px; }
.window-buttons { display: flex; gap: 4px; justify-content: flex-end; padding-right: 6px; color: #84817a; }
.idle .window-buttons { color: #5e5c57; }
.window-buttons .hot { color: #ee6434; }
.tabs { height: 33px; flex: none; display: flex; background: #504d46; border-bottom: 1px solid #34332e; color: #d8d4cb; }
.tab { flex: 1 1 0; max-width: 225px; min-width: 0; justify-content: flex-start; gap: 6px; padding: 2px 12px 0 9px; background: linear-gradient(#7b7870, #7b7870) right 4px / 1px 24px no-repeat; }
.tab span { flex: 1; text-align: left; white-space: nowrap; overflow: hidden; -webkit-mask-image: linear-gradient(90deg, #000 calc(100% - 36px), transparent); mask-image: linear-gradient(90deg, #000 calc(100% - 36px), transparent); }
.idle .tab:first-child span, .idle .tab.active span { -webkit-mask-image: none; mask-image: none; }
.tab svg:last-child { color: #bab6ad; }
.tab.active { background: #f4f3f2; border-top: 2px solid #f07746; padding-top: 0; height: 33px; color: #4c4c4c; }
.tab.active svg:last-child { color: #666; }
.tab.last-before { background: none; }
.new-tab { width: 33px; padding-top: 2px; }
.navbar { height: 41px; flex: none; display: flex; align-items: center; padding-left: 3px; background: #f4f3f2; border-bottom: 1px solid #c6c4c1; color: #5c5c5c; }
.navbar > button { width: 32px; height: 34px; }
.navbar > .nav-back { width: 34px; border: 1px solid #a9a7a4; border-radius: 50%; background: #fcfcfc; }
.off { opacity: .4; }
.urlbar { flex: 1; margin: 0 117px; height: 30px; display: flex; align-items: center; padding: 0 6px 0 7px; background: #fff; border: 1px solid #bdbbb7; border-radius: 4px; color: #8a8a8a; gap: 12px; }
.urlbar .rule { height: 22px; background: #c0c0c0; margin: 0 -6px; }
.urlbar input { flex: 1; margin-left: -4px; height: 24px; color: transparent; -webkit-background-clip: text; background-clip: text; }
.url-coolors { background-image: linear-gradient(90deg, #8c8c8c 50px, #2a2a2a 50px, #2a2a2a 118px, #8c8c8c 118px); }
.url-drive { background-image: linear-gradient(90deg, #8c8c8c 88px, #2a2a2a 88px, #2a2a2a 166px, #8c8c8c 166px); }
.nav-tools { display: flex; border-right: 1px solid #d6d4d1; padding-right: 3px; height: 34px; }
.nav-tools button { width: 32px; }
.navbar > .nav-menu { width: 40px; }
.badged { position: relative; }
.badge { position: absolute; left: 18px; top: -1px; width: 13px; height: 13px; background: #4d4d4d; color: #fff; font-size: 11px; line-height: 13px; font-weight: 400; border-radius: 1px; }

/* Palette generator */
.coolors { flex: 1; min-height: 0; display: flex; flex-direction: column; background: #fff; font-family: Inter, sans-serif; }
.c-header { height: 57px; flex: none; display: flex; align-items: center; padding: 0 14px 0 23px; border-bottom: 1px solid #dfdfdf; color: #6d6c72; }
.c-logo { color: #06f; font: 900 23px Lato, sans-serif; }
.c-plus { width: 36px; text-align: center; font-size: 22px; font-weight: 300; }
.c-sponsor { display: flex; align-items: center; gap: 7px; color: #111; font: 400 24px Lato, sans-serif; }
.c-tag { display: flex; align-items: center; gap: 10px; margin-left: 14px; font-size: 13px; color: #6a696e; }
.c-tag svg { color: #222; }
.c-nav { margin-left: auto; display: flex; align-items: center; height: 57px; font-size: 15px; }
.c-nav a { height: 57px; display: flex; align-items: center; gap: 10px; padding: 0 10px; }
.c-nav a.on { color: #06f; border-bottom: 2px solid #06f; padding-top: 2px; }
.c-nav .rule { height: 28px; margin: 0 7px; }
.c-nav .c-signin { margin-right: 9px; }
.c-signup { width: 75px; height: 34px; border-radius: 8px; background: #06f; color: #fff; font-weight: 600; font-size: 14px; }
.c-toolbar { height: 55px; flex: none; display: flex; align-items: center; padding: 0 13px 0 21px; color: #111; font-size: 15px; }
.c-toolbar p { flex: 1; color: #7b7a80; }
.c-toolbar button { width: 38px; height: 38px; }
.c-toolbar .rule { height: 28px; margin: 0 7px; }
.c-toolbar .wide { width: auto; gap: 13px; padding: 0 9px 0 10px; }
.palette { flex: 1; min-height: 0; display: grid; grid-template-columns: repeat(5, 1fr); position: relative; box-shadow: inset 0 1px rgba(0, 0, 0, .12); }
.swatch { display: flex; flex-direction: column; justify-content: flex-end; align-items: center; padding-bottom: 30px; }
.tools { display: flex; flex-direction: column; padding-bottom: 58px; }
.tools button { width: 62px; height: 62px; }
.padlock { width: 20px; height: 24px; }
.dim { opacity: .4; }
.swatch h2 { font-size: 30px; line-height: 40px; font-weight: 600; margin-top: 1px; }
.swatch p { font-size: 12px; line-height: 20px; font-weight: 500; opacity: .6; }
.swatch h2 + p { margin-top: 5px; }
.black { background: #000; color: #fff; }
.purple { background: #160c28; color: #fff; }
.aqua { background: #56e39f; }
.ocean { background: #59c9a5; }
.snow { background: #fff5f5; }
.promo { position: absolute; right: 19px; top: 18px; width: 291px; display: flex; gap: 11px; padding: 10px; background: #fff; border: 1px solid #e8dede; border-radius: 8px; box-shadow: 0 3px 8px rgba(0, 0, 0, .06); }
.promo-art { width: 99px; height: 99px; flex: none; display: flex; align-items: center; justify-content: center; border: 1px solid #e2e2e2; border-radius: 5px; }
.promo-body { flex: 1; display: flex; flex-direction: column; font-size: 11px; line-height: 15px; color: #7d7c82; }
.promo-head { display: flex; justify-content: space-between; align-items: center; height: 20px; font-size: 14px; margin-bottom: 2px; }
.promo-head h3 { font-weight: 600; color: #000; }
.promo-body p { margin-right: -4px; }
.promo-body > a { align-self: flex-end; color: #06f; margin-top: 3px; }

/* Desktop shell */
.topbar { height: 27px; flex: none; display: flex; align-items: center; position: relative; padding: 0 15px 0 12px; background: linear-gradient(#56534c, #403e39); color: #dfdbd2; font-size: 15px; line-height: 20px; }
.app-menu { gap: 6px; margin-left: 19px; }
.topbar time { position: absolute; left: 67px; right: 0; text-align: center; pointer-events: none; }
.tray { margin-left: auto; display: flex; align-items: center; gap: 12px; }
.teams-tray { margin-right: 16px; }
.workspace { flex: 1; min-height: 0; display: flex; }
.dock { width: 67px; flex: none; display: flex; flex-direction: column; background: #33312d; border-right: 1px solid #3c3a36; }
.dock button { height: 64px; position: relative; flex: none; }
.dock .current::before { content: ""; position: absolute; inset: 1px 2px; background: #5a5853; border-radius: 4px; }
.dock svg { position: relative; }
.dock .run::after { content: ""; position: absolute; left: 2px; width: 6px; height: 6px; border-radius: 50%; background: #e95420; }
.dock .two::after { box-shadow: 0 9px #e95420; top: 24px; }
.dock .show-apps { margin-top: auto; }

/* Drive, dimmed below the viewer */
.drive { flex: 1; min-height: 0; position: relative; display: flex; flex-direction: column; overflow: hidden; background: #262626; color: #131313; font-family: Roboto, sans-serif; }
.d-header { height: 64px; flex: none; display: flex; align-items: center; padding: 0 19px 0 21px; border-bottom: 1px solid #202020; }
.d-brand { width: 235px; display: flex; align-items: center; gap: 14px; font-size: 22px; }
.d-brand svg { opacity: .18; }
.d-search { width: 720px; height: 46px; display: flex; align-items: center; gap: 16px; padding: 0 18px; background: #222; border-radius: 8px; font-size: 16px; }
.d-search input::placeholder { color: #141414; }
.d-tools { margin-left: auto; display: flex; align-items: center; gap: 20px; }
.d-tools .i20 { margin: 0 12px 0 30px; }
.d-avatar { width: 32px; height: 32px; border-radius: 50%; background: #0a0504; color: #2a2a2a; display: flex; align-items: center; justify-content: center; font-size: 18px; }
.d-body { flex: 1; min-height: 0; display: flex; }
.d-side { width: 256px; flex: none; display: flex; flex-direction: column; font-weight: 500; font-size: 13px; }
.d-new { width: 121px; height: 49px; margin: 12px 0 13px 10px; gap: 21px; padding-right: 14px; border-radius: 25px; box-shadow: 0 1px 3px #151515; font-size: 14px; }
.d-side > a { height: 40px; display: flex; align-items: center; gap: 24px; padding-left: 27px; }
.d-side > a .i10 { margin: 0 -22px 0 -16px; }
.d-side hr { height: 1px; width: 240px; background: #1f1f1f; margin: 8px 0; }
.d-quota { padding-left: 75px; margin-top: 6px; line-height: 20px; font-weight: 400; }
.d-meter { height: 3px; margin: 5px 16px 13px 75px; background: #202020; }
.d-meter i { display: block; width: 8px; height: 3px; background: #07132b; }
.d-side > .d-buy { padding-left: 75px; color: #07132b; }
.d-main { flex: 1; min-width: 0; display: flex; flex-direction: column; border-right: 1px solid #202020; }
.d-bar { height: 48px; flex: none; display: flex; align-items: center; padding: 0 12px 0 10px; border-bottom: 1px solid #202020; }
.d-crumbs { flex: 1; display: flex; align-items: center; gap: 12px; font-size: 18px; }
.d-bar button { width: 48px; height: 48px; }
.d-bar .rule { height: 32px; margin: 0 8px; background: #202020; }
.d-content { flex: 1; border-right: 6px solid #1f1f1f; }
.d-sort { height: 65px; display: flex; justify-content: space-between; align-items: center; padding: 0 98px 0 23px; font-weight: 500; font-size: 13px; }
.d-sort button { gap: 20px; }
.d-files { display: flex; gap: 16px; padding-left: 8px; }
.d-card { width: 229px; height: 228px; flex: none; display: flex; flex-direction: column; border: 1px solid #1f1f1f; border-radius: 6px; overflow: hidden; }
.d-thumb { flex: 1; position: relative; overflow: hidden; padding: 22px 13px 0; display: flex; flex-direction: column; font-family: "Liberation Sans", sans-serif; }
.d-thumb small { font-size: 5px; line-height: 8px; }
.d-thumb h4 { margin-top: 26px; font-size: 8px; line-height: 9px; font-weight: 700; color: #07073f; }
.d-thumb em { font: italic 6px/18px "Liberation Serif", serif; }
.d-art { position: absolute; right: 0; bottom: -58px; width: 118px; height: 136px; }
.d-card footer { height: 49px; flex: none; display: flex; align-items: center; gap: 20px; padding: 0 20px; background: #1d2228; color: #081a38; font-weight: 500; font-size: 13px; white-space: nowrap; }
.d-cover { height: 179px; background: #000; color: #222; font-size: 28px; line-height: 31px; padding-top: 34px; font-weight: 300; }
.d-rail { width: 56px; flex: none; display: flex; flex-direction: column; align-items: center; padding-top: 20px; gap: 39px; }
.d-rail hr { width: 20px; height: 1px; background: #1c1c1c; margin: -4px 0; }

/* Document viewer */
.viewer { position: absolute; inset: 0; }
.pages { height: 100%; overflow: hidden; display: flex; flex-direction: column; align-items: center; gap: 16px; }
.page { width: 800px; flex: none; background: #fff; color: #000; font-family: "Liberation Sans", sans-serif; box-shadow: 0 0 12px rgba(0, 0, 0, .45); }
.tail { width: 669px; height: 10px; margin-left: 61px; background: #a8acb2; border-bottom: 1px solid #777; box-shadow: 0 0 5px 4px #aaa; clip-path: inset(0 -8px -8px -8px); }
.steps { list-style: none; margin: 35px 0 0 90px; display: flex; flex-direction: column; gap: 7px; line-height: 17px; font-size: 14px; counter-reset: step 14; }
.steps li { display: flex; counter-increment: step; white-space: nowrap; }
.steps li::before { content: counter(step) "."; width: 23px; flex: none; }
.steps .with-icon { align-items: baseline; margin-top: 4px; }
.refine { display: inline-block; width: 21px; height: 21px; vertical-align: -4px; }
.shot { position: relative; background: #f4f6fa; box-shadow: 0 0 0 2px #999, 0 0 6px 4px #bbb; }
.refinery { width: 658px; height: 244px; margin: 21px 0 0 61px; font: 7px/9px Roboto, sans-serif; color: #525a62; }
.r-crumbs { height: 18px; display: flex; align-items: center; gap: 7px; padding: 0 2px 0 4px; border-bottom: 1px solid #e6e9ee; }
.r-crumbs a, .r-tabs .on, .r-op button { color: #3b6bb3; }
.r-save { width: 7px; height: 7px; margin-left: auto; }
.r-run { width: 8px; height: 7px; margin-left: 12px; }
.r-op { display: flex; gap: 9px; height: 17px; margin: 7px 0 0 4px; }
.r-op button { width: 50px; background: #fff; box-shadow: 0 1px 2px #ccc; }
.r-op input { flex: 1; background: #fff; padding-left: 4px; font: italic 7px "Liberation Serif", serif; }
.r-op input::placeholder { color: #444; }
.r-tabs { height: 17px; display: flex; padding-left: 12px; color: #1f2a35; }
.r-tabs a { line-height: 18px; padding: 0 4px; margin-right: 5px; }
.r-tabs .on { border-bottom: 1px solid #3b6bb3; }
.r-turn { width: 11px; height: 8px; margin: 5px 8px 0 0; }
.r-turn.blue { margin-left: 310px; color: #3b6bb3; }
.r-table { width: 100%; table-layout: fixed; border-collapse: collapse; background: #fff; }
.r-table th, .r-table td { padding: 0 0 0 7px; text-align: left; white-space: nowrap; overflow: hidden; height: 13px; border-bottom: 1px solid #eceef1; }
.r-table thead th { height: 25px; width: 11.2%; color: #15202b; font-weight: 700; vertical-align: top; padding-top: 4px; }
.r-table thead .n { width: 12px; }
.r-table thead .last { width: auto; }
.r-table small { display: block; font-size: 7px; font-weight: 400; color: #525a62; }
.r-table tbody th { padding-left: 2px; background: #f4f6fa; font-weight: 500; }
.r-dots { position: absolute; left: 518px; top: 63px; width: 2px; height: 8px; }
.r-thumb { position: absolute; right: 4px; top: 85px; width: 4px; height: 13px; border-radius: 2px; background: #c0c0c0; }
.r-menu { position: absolute; left: 519px; top: 74px; width: 82px; height: 156px; display: flex; flex-direction: column; background: #edf0f3; }
.r-menu button { flex: 1; justify-content: space-between; padding: 0 8px 0 9px; white-space: nowrap; }
.r-menu .sel { background: #dce1e5; }
.r-menu .link { color: #3b6bb3; }
.r-menu .caps { border-top: 1px solid #dce1e5; font-size: 6px; }
.r-arrow { position: absolute; left: 474px; top: 79px; width: 50px; height: 51px; filter: drop-shadow(0 1px 1px rgba(0, 0, 0, .4)); }
.page-foot { display: flex; align-items: flex-start; justify-content: space-between; margin: 169px 64px 0; padding: 2px 2px 0; border-top: 2px solid #666; height: 68px; font-size: 16px; line-height: 19px; }
.page-foot small { font-size: 12px; line-height: 14px; color: #aaa; text-align: center; padding-top: 5px; margin-right: 14px; }
.page-head { text-align: right; padding: 36px 66px 0 0; font-size: 13px; line-height: 16px; }
.second .steps { margin-top: 22px; counter-reset: step 0; }
.closeup { width: 496px; margin: 13px 0 0 69px; height: 140px; font: 12px/14px Roboto, sans-serif; color: #525a62; }
.z-strip { height: 5px; background: #fdfdfd; border-bottom: 1px solid #e0e0e4; }
.z-op { display: flex; gap: 17px; height: 28px; margin: 11px 0 0 11px; }
.z-op button { width: 96px; color: #3b6bb3; background: #fff; box-shadow: 0 2px 4px #ccc; }
.z-op input { flex: 1; background: #fff; padding-left: 8px; font: italic 12px "Liberation Serif", serif; }
.z-op input::placeholder { color: #444; }
.z-tabs { display: flex; padding-left: 28px; height: 28px; color: #1f2a35; }
.z-tabs a { padding: 9px 9px 0; margin-right: 7px; }
.z-tabs .on { color: #3b6bb3; border-bottom: 3px solid #5d8bc9; }
.z-cols { display: grid; grid-template-columns: 142px 142px 142px 1fr; padding-left: 28px; background: #eef1f5; }
.z-cols > div { position: relative; background: #fff; padding: 5px 12px 0; height: 68px; line-height: 12px; }
.z-cols .picked { border-top: 3px solid #2f62ad; padding-top: 2px; background: #f6f8f9; }
.z-cols b { display: block; color: #15202b; line-height: 13px; }
.z-dots { position: absolute; right: 14px; top: 3px; width: 4px; height: 16px; }
.z-pop { position: absolute; left: 152px; top: 101px; width: 159px; height: 40px; background: #edf0f3; }
.v-shade { position: absolute; inset: 0 0 auto; height: 72px; background: linear-gradient(rgba(0, 0, 0, .65), transparent); }
.v-head { position: absolute; inset: 0 0 auto; height: 56px; display: flex; align-items: center; justify-content: space-between; padding: 0 19px 0 21px; color: #fff; }
.v-head h2 { flex: 1; display: flex; align-items: center; gap: 12px; margin-left: 23px; font-size: 14px; }
.v-head h2 svg { color: #ea4335; }
.v-open { position: absolute; left: 50%; top: 12px; transform: translateX(-50%); width: 210px; height: 32px; display: flex; align-items: center; padding-left: 5px; background: #262626; border-radius: 2px; }
.v-open button { gap: 6px; white-space: nowrap; }
.docs { width: 24px; height: 24px; }
.v-open .v-more { flex: 1; height: 24px; margin-left: 5px; border-left: 1px solid #555; }
.v-tools { display: flex; gap: 24px; }
.v-next { position: absolute; right: 15px; top: 456px; width: 40px; height: 40px; border-radius: 50%; background: #080808; color: #fff; }
.v-thumb { position: absolute; right: 0; top: 467px; width: 5px; height: 48px; background: #8a8a8a; }
.v-pager { position: absolute; left: 50%; bottom: 12px; transform: translateX(-50%); width: 266px; height: 44px; display: flex; align-items: center; padding: 0 2px 0 12px; border-radius: 3px; background: rgba(34, 34, 34, .88); color: #e8e8e8; font-size: 13px; }
.v-pager input { width: 8px; margin: 0 21px; }
.v-pager span + span { margin-left: 16px; }
.v-pager .rule { height: 44px; margin: 0 3px 0 15px; background: #444; }
.v-pager button { flex: 1; }
```
